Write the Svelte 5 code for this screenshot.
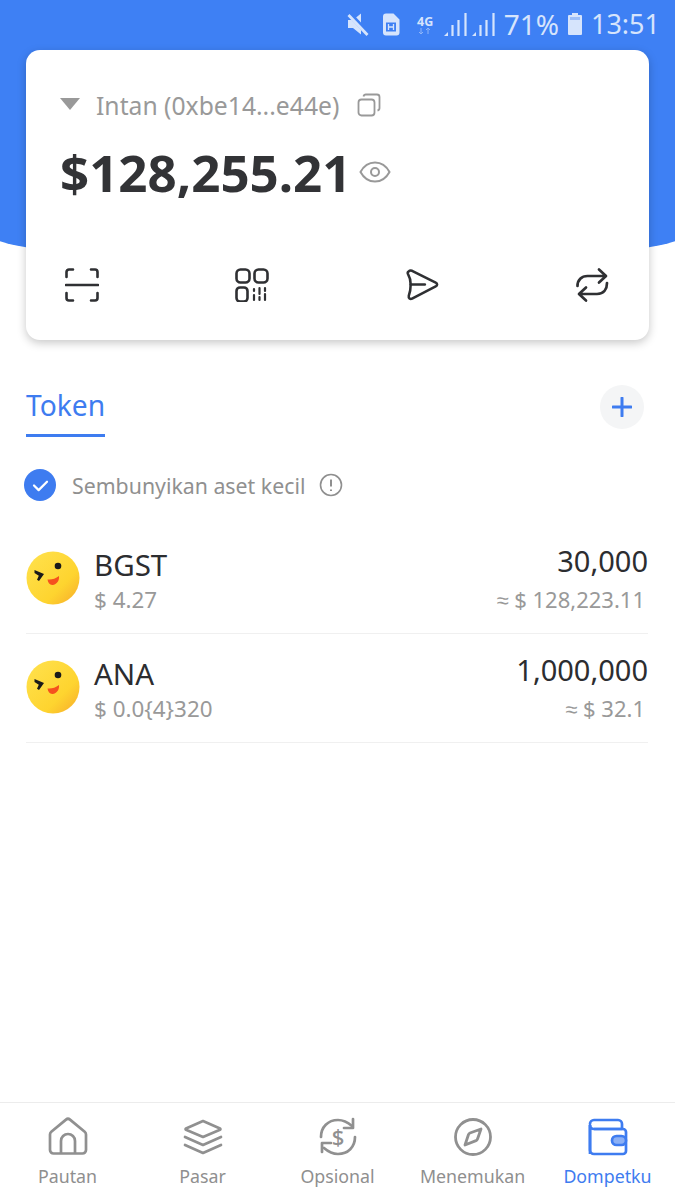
<script lang="ts">
	const tokens = [
		{ name: 'BGST', price: '$ 4.27', amount: '30,000', value: '≈ $ 128,223.11' },
		{ name: 'ANA', price: '$ 0.0{4}320', amount: '1,000,000', value: '≈ $ 32.1' }
	];
	const tabs = ['Pautan', 'Pasar', 'Opsional', 'Menemukan', 'Dompetku'];
</script>

<div class="page">
	<div class="hero"></div>

	<div class="status">
		<svg class="mute" viewBox="0 0 24 24" width="24" height="24">
			<path d="M2 8h5l8-6.500v21L7 16H2z" fill="#d6e4fc" />
			<path d="M3 1.500l19 20" stroke="#3e80f4" stroke-width="5" />
			<path d="M2.500 3l19 20" stroke="#d6e4fc" stroke-width="2.800" />
		</svg>
		<svg class="sim" viewBox="0 0 18 23" width="18" height="23">
			<path d="M4 .5h7.500l6 6V19.500a3 3 0 0 1-3 3H4a3 3 0 0 1-3-3V3.500a3 3 0 0 1 3-3z" fill="#d6e4fc" />
			<rect x="4" y="9.500" width="10" height="9" fill="#3e80f4" />
			<path d="M6.500 11v6M11.500 11v6M6.500 14h5" stroke="#d6e4fc" stroke-width="1.300" />
		</svg>
		<div class="net">
			<span>4G</span>
			<svg viewBox="0 0 14 6" width="14" height="6">
				<path d="M3 0v6M1 4l2 2 2-2" stroke="#8fb5f8" fill="none" />
				<path d="M10 6V0M8 2l2-2 2 2" stroke="#8fb5f8" fill="none" />
			</svg>
		</div>
		<svg class="signal" viewBox="0 0 23 23" width="23" height="23">
			<path d="M0 23l4-4v4z" fill="#d6e4fc" />
			<path d="M8.500 12v11M14.500 7v16M21.500 0v23" stroke="#d6e4fc" stroke-width="2.200" />
		</svg>
		<svg class="signal second" viewBox="0 0 23 23" width="23" height="23">
			<path d="M0 23l4-4v4z" fill="#d6e4fc" />
			<path d="M8.500 12v11M14.500 7v16M21.500 0v23" stroke="#d6e4fc" stroke-width="2.200" />
		</svg>
		<span class="pct">71%</span>
		<svg class="batt" viewBox="0 0 16 24" width="16" height="24">
			<path d="M5 1h6v2h3a1 1 0 0 1 1 1v18a1 1 0 0 1-1 1H2a1 1 0 0 1-1-1V4a1 1 0 0 1 1-1h3z" fill="#d6e4fc" />
			<rect x="3" y="5" width="10" height="3" fill="#9dbff9" />
		</svg>
		<span class="time">13:51</span>
	</div>

	<div class="card">
		<div class="account">
			<span class="caret"></span>
			<span class="acc-name">Intan (0xbe14...e44e)</span>
			<svg viewBox="0 0 24 24" width="24" height="24" fill="none" stroke="#999" stroke-width="1.800">
				<rect x="1.500" y="6.500" width="16" height="16" rx="3" />
				<path d="M6.500 3.500a2.500 2.500 0 0 1 2.500-2h11a2.500 2.500 0 0 1 2.500 2.500v11a2.500 2.500 0 0 1-2 2.500" />
			</svg>
		</div>
		<div class="balance">
			<span>$128,255.21</span>
			<svg viewBox="0 0 32 24" width="32" height="24" fill="none" stroke="#999" stroke-width="2">
				<path d="M1.500 12C5 5.500 10 2.500 16 2.500S27 5.500 30.500 12C27 18.500 22 21.500 16 21.500S5 18.500 1.500 12z" />
				<circle cx="16" cy="12" r="4" />
			</svg>
		</div>
		<div class="actions">
			<svg viewBox="0 0 34 34" width="34" height="34" fill="none" stroke="#2f3033" stroke-width="2.600" stroke-linecap="round">
				<path d="M1.500 9V4a2.500 2.500 0 0 1 2.500-2.500h4M26 1.500h4A2.500 2.500 0 0 1 32.500 4v5M1.500 25v5A2.500 2.500 0 0 0 4 32.500h4M26 32.500h4a2.500 2.500 0 0 0 2.500-2.500v-5M1 17h32" />
			</svg>
			<svg viewBox="0 0 34 34" width="34" height="34" fill="none" stroke="#2f3033" stroke-width="2.600" stroke-linecap="round">
				<rect x="1.500" y="1.500" width="13" height="13" rx="4" />
				<rect x="19.500" y="1.500" width="13" height="13" rx="4" />
				<rect x="1.500" y="19.500" width="11" height="14" rx="3.500" />
				<path d="M19 21v2M19 27v5M24.500 20v6M24.500 29v3M30 20v3M30 26v6" stroke-width="2.200" />
			</svg>
			<svg viewBox="0 0 36 34" width="34" height="34" fill="none" stroke="#2f3033" stroke-width="2.700" stroke-linecap="round" stroke-linejoin="round">
				<path d="M4 2.500c1-1 2-1 3.500-.5l25 12.500c2 1 2 3 0 4L7.500 31.500c-2 1-4-.5-3.500-3 1.500-4 2-8 2-12 0-4-1-8-3-11.500-.3-1 0-2 1-2.500z" />
				<path d="M6 16.500h15" />
			</svg>
			<svg viewBox="0 0 34 36" width="34" height="36" fill="none" stroke="#2f3033" stroke-width="2.700" stroke-linecap="round" stroke-linejoin="round">
				<path d="M2.500 19c0-6 4-10 10-10H30M24 2.500L31 9l-7 6.500" />
				<path d="M32 16c0 6-3 11-10 11H5M11 20.500L4 27l7 6.500" />
			</svg>
		</div>
	</div>

	<div class="tabs">
		<div class="tab">Token</div>
		<div class="add">
			<svg viewBox="0 0 20 20" width="20" height="20">
				<path d="M10 1v18M1 10h18" stroke="#3e7cf0" stroke-width="3" stroke-linecap="round" />
			</svg>
		</div>
	</div>

	<div class="hide">
		<span class="check">
			<svg viewBox="0 0 18 14" width="17" height="13">
				<path d="M2 7l5 5 9-9" stroke="#fff" stroke-width="2.400" fill="none" stroke-linecap="round" stroke-linejoin="round" />
			</svg>
		</span>
		<span class="hide-label">Sembunyikan aset kecil</span>
		<svg viewBox="0 0 24 24" width="24" height="24" fill="none" stroke="#8f8f8f" stroke-width="1.600">
			<circle cx="12" cy="12" r="10.500" />
			<path d="M12 6.500v7M12 16.500v1.600" stroke-width="2" />
		</svg>
	</div>

	<div class="list">
		{#each tokens as t (t.name)}
			<div class="row">
				<svg class="coin" viewBox="0 0 54 54" width="54" height="54">
					<defs>
						<linearGradient id="face-{t.name}" x1="0.100" y1="0.100" x2="0.900" y2="0.900">
							<stop offset="0" stop-color="#ffe04a" />
							<stop offset="0.700" stop-color="#fed42f" />
							<stop offset="1" stop-color="#f9b62c" />
						</linearGradient>
					</defs>
					<circle cx="27" cy="27" r="26.500" fill="url(#face-{t.name})" />
					<circle cx="32" cy="15" r="3.300" fill="#1a1a1a" />
					<path d="M8.500 19l9.500 4-5 7-2-1.200 1.800-4L8.500 22z" fill="#1a1a1a" />
					<path d="M21.500 28.500c4 .5 8-.8 11.500-3.500.5 4.500-2 8.500-6.500 9-2.500.2-4.500-2-5-5.500z" fill="#f5511e" />
				</svg>
				<div class="info">
					<div class="name">{t.name}</div>
					<div class="sub">{t.price}</div>
				</div>
				<div class="vals">
					<div class="amount">{t.amount}</div>
					<div class="sub value">{t.value}</div>
				</div>
			</div>
		{/each}
	</div>

	<nav class="nav">
		{#each tabs as label, i (label)}
			<div class="item" class:active={i === 4}>
				{#if i === 0}
					<svg viewBox="0 0 40 40" width="40" height="40" fill="none" stroke="#909090" stroke-width="2.700" stroke-linejoin="round">
						<path d="M2 17.500c0-1 .5-2 1.300-2.700L18 2.600c1.200-1 2.800-1 4 0l14.700 12.200c.8.700 1.300 1.700 1.300 2.700V33a3.500 3.500 0 0 1-3.500 3.500h-29A3.500 3.500 0 0 1 2 33z" />
						<path d="M13 36V24a7 7 0 0 1 14 0v12" />
					</svg>
				{:else if i === 1}
					<svg viewBox="0 0 40 40" width="40" height="40" fill="none" stroke="#909090" stroke-width="2.700" stroke-linejoin="round" stroke-linecap="round">
						<path d="M20 4L37 11.500c.6.300.6 1 0 1.300L20 20 3 12.800c-.6-.3-.6-1 0-1.300z" />
						<path d="M2 20l18 8 18-8" />
						<path d="M2 28l18 8 18-8" />
					</svg>
				{:else if i === 2}
					<svg viewBox="0 0 40 40" width="40" height="40" fill="none" stroke="#909090" stroke-width="2.700" stroke-linecap="round" stroke-linejoin="round">
						<path d="M3 20C3 10 10 3 20 3c6 0 10 2.500 14 6" />
						<path d="M35 2v9h-9" />
						<path d="M37 20c0 10-7 17-17 17-6 0-10-2.500-14-6" />
						<path d="M4 35v-9h9" />
						<text x="20" y="28" text-anchor="middle" class="dollar">$</text>
					</svg>
				{:else if i === 3}
					<svg viewBox="0 0 40 40" width="40" height="40" fill="none" stroke="#909090" stroke-width="2.800" stroke-linejoin="round">
						<circle cx="20" cy="20" r="17.500" />
						<path d="M28 12l-3.500 10c-.3.800-.8 1.300-1.500 1.600L12 28l3.500-10.500c.3-.7.800-1.200 1.500-1.500z" />
					</svg>
				{:else}
					<svg viewBox="0 0 40 40" width="40" height="40" fill="none" stroke="#3e7cf0" stroke-width="2.700" stroke-linejoin="round">
						<path d="M2 7a4 4 0 0 1 4-4h24a4 4 0 0 1 4 4v5H6a4 4 0 0 1-4-4v29" />
						<path d="M2 8v25a4 4 0 0 0 4 4h29a3 3 0 0 0 3-3V15a3 3 0 0 0-3-3H6" />
						<rect x="24" y="19" width="14" height="9" rx="4.500" fill="#8cb0f5" />
					</svg>
				{/if}
				<span class="label">{label}</span>
			</div>
		{/each}
	</nav>
</div>

<style>
	:global(body) {
		margin: 0;
		background: #fff;
	}
	.page {
		position: relative;
		height: 1200px;
		display: flex;
		flex-direction: column;
		overflow: hidden;
		font-family: 'Noto Sans', sans-serif;
		color: #2c2d30;
	}
	/* blue backdrop behind the card, bottom edge bows downward */
	.hero {
		position: absolute;
		left: -10px;
		right: -10px;
		top: 0;
		height: 264px;
		background: #3e80f4;
		border-radius: 0 0 50% 50% / 0 0 30px 30px;
	}
	.status {
		position: relative;
		height: 48px;
		display: flex;
		align-items: center;
		justify-content: flex-end;
		padding-right: 15px;
		color: #d6e4fc;
	}
	.sim {
		margin-left: 12px;
	}
	.net {
		display: flex;
		flex-direction: column;
		align-items: center;
		width: 19px;
		margin-left: 16px;
		font: 700 12.500px/13px 'Noto Sans', sans-serif;
	}
	.signal {
		margin-left: 9px;
	}
	.signal.second {
		margin-left: 5px;
	}
	.pct {
		margin-left: 9px;
		font-size: 28px;
		line-height: 48px;
	}
	.time {
		font-size: 27px;
		line-height: 48px;
	}
	.batt {
		margin: 0 8px;
	}
	.card {
		position: relative;
		margin: 2px 26px 0;
		height: 290px;
		box-sizing: border-box;
		padding: 39px 34px 0;
		background: #fff;
		border-radius: 14px;
		box-shadow: 0 3px 10px rgba(0, 0, 0, 0.22);
	}
	.account {
		height: 32px;
		display: flex;
		align-items: center;
		color: #999;
		font-size: 24.700px;
	}
	.caret {
		width: 0;
		height: 0;
		border-left: 10.500px solid transparent;
		border-right: 10.500px solid transparent;
		border-top: 12px solid #999;
		margin-right: 16px;
		margin-top: -2px;
	}
	.acc-name {
		margin-right: 18px;
	}
	.balance {
		display: flex;
		align-items: center;
		gap: 8px;
		margin-top: 17px;
		height: 68px;
		font-size: 51px;
		font-weight: 700;
		color: #323336;
	}
	.actions {
		display: flex;
		justify-content: space-between;
		align-items: center;
		margin-top: 61px;
		padding: 0 6px 0 5px;
	}
	.tabs {
		position: relative;
		display: flex;
		justify-content: space-between;
		align-items: flex-start;
		margin: 44px 31px 0 26px;
		height: 53px;
	}
	.tab {
		height: 50px;
		line-height: 42px;
		font-size: 28.200px;
		color: #3e7cf0;
		border-bottom: 3px solid #3e7cf0;
	}
	.add {
		width: 44px;
		height: 44px;
		margin-top: 1px;
		border-radius: 50%;
		background: #f4f5f6;
		display: flex;
		align-items: center;
		justify-content: center;
	}
	.hide {
		display: flex;
		align-items: center;
		margin: 32px 0 0 24px;
		height: 32px;
		color: #909090;
		font-size: 21.300px;
	}
	.check {
		width: 32px;
		height: 32px;
		border-radius: 50%;
		background: #3e7cf0;
		display: flex;
		align-items: center;
		justify-content: center;
		margin-right: 16px;
	}
	.hide-label {
		margin-right: 14px;
	}
	.list {
		margin: 24px 27px 0 26px;
	}
	.row {
		height: 109px;
		box-sizing: border-box;
		display: flex;
		align-items: center;
		border-bottom: 1px solid #f0f0f0;
	}
	.coin {
		flex: none;
		margin-right: 14px;
		margin-top: -2px;
	}
	.info,
	.vals {
		display: flex;
		flex-direction: column;
		gap: 2px;
		margin-top: 4px;
	}
	.vals {
		margin-left: auto;
		margin-top: -2px;
		align-items: flex-end;
		gap: 5px;
	}
	.name,
	.amount {
		font-size: 29px;
		line-height: 36px;
		color: #2c2d30;
	}
	.name {
		font-size: 29.500px;
	}
	.sub {
		font-size: 22px;
		line-height: 30px;
		color: #999;
	}
	.info .sub {
		font-size: 22.400px;
	}
	.value {
		margin-right: 3px;
	}
	.nav {
		margin-top: auto;
		height: 97px;
		display: grid;
		grid-template-columns: repeat(5, 135px);
		border-top: 1px solid #ececec;
	}
	.item {
		display: flex;
		flex-direction: column;
		align-items: center;
		padding-top: 14px;
		color: #8f8f8f;
	}
	.item .label {
		margin-top: 6px;
		font-size: 17.800px;
		line-height: 26px;
	}
	.item.active {
		color: #3e7cf0;
	}
	.dollar {
		font: 500 22px 'Noto Sans', sans-serif;
		fill: #909090;
		stroke: none;
	}
</style>
